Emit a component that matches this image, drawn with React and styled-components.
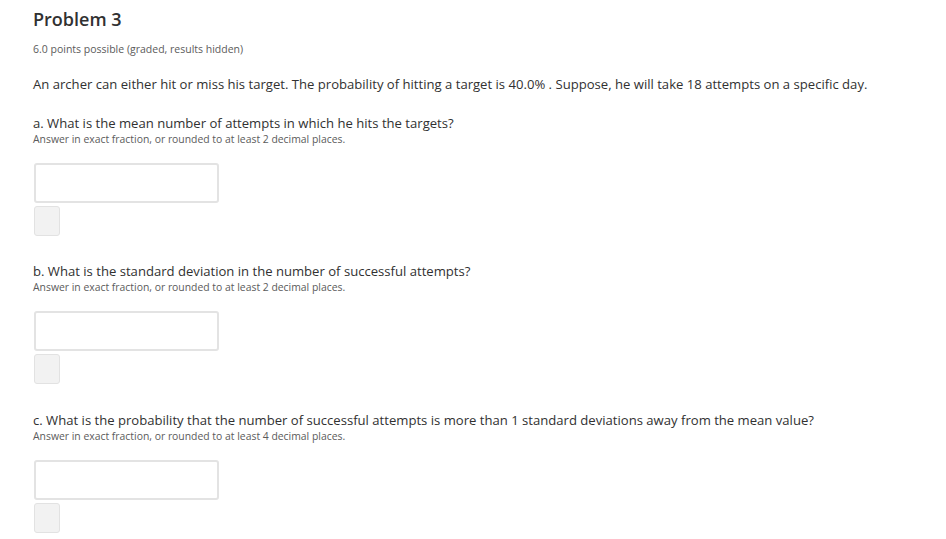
import React from "react";
import styled, { createGlobalStyle } from "styled-components";

const Global = createGlobalStyle`
  html, body { margin: 0; padding: 0; background: #fff; }
  body { font-family: "Open Sans", "Noto Sans", sans-serif; color: #313131; }
`;

const Page = styled.div`
  padding: 6px 33px 0 33px;
`;

const Title = styled.h2`
  margin: 0;
  font-size: 18px;
  font-weight: 600;
  line-height: 26px;
  color: #313131;
`;

const Meta = styled.div`
  margin-top: 10px;
  font-size: 10.5px;
  line-height: 14px;
  color: #5b5b5b;
`;

const Stem = styled.p`
  margin: 18px 0 0 0;
  font-size: 13.1px;
  line-height: 20px;
  color: #313131;
`;

const Part = styled.section`
  margin-top: ${(p) => p.$top}px;
`;

const Question = styled.div`
  font-size: 13.1px;
  line-height: 18px;
  color: #313131;
`;

const Hint = styled.div`
  font-size: 10.4px;
  line-height: 14px;
  color: #5b5b5b;
`;

const Input = styled.input`
  display: block;
  box-sizing: border-box;
  margin: 17px 0 0 1px;
  width: 185px;
  height: 40px;
  border: 2px solid #e3e3e3;
  border-radius: 3px;
  background: #fff;
  outline: none;
`;

const Check = styled.button`
  display: block;
  margin: 3px 0 0 1px;
  width: 26px;
  height: 30px;
  border: 1px solid #e2e2e2;
  border-radius: 3px;
  background: #f2f2f2;
  padding: 0;
`;

const parts = [
  {
    q: "a. What is the mean number of attempts in which he hits the targets?",
    h: "Answer in exact fraction, or rounded to at least 2 decimal places.",
    top: 20,
  },
  {
    q: "b. What is the standard deviation in the number of successful attempts?",
    h: "Answer in exact fraction, or rounded to at least 2 decimal places.",
    top: 26,
  },
  {
    q: "c. What is the probability that the number of successful attempts is more than 1 standard deviations away from the mean value?",
    h: "Answer in exact fraction, or rounded to at least 4 decimal places.",
    top: 27,
  },
];

export default function App() {
  return (
    <>
      <Global />
      <Page>
        <Title>Problem 3</Title>
        <Meta>6.0 points possible (graded, results hidden)</Meta>
        <Stem>
          An archer can either hit or miss his target. The probability of hitting a target is 40.0% . Suppose, he will take 18 attempts on a specific day.
        </Stem>
        {parts.map((p, i) => (
          <Part key={i} $top={p.top}>
            <Question>{p.q}</Question>
            <Hint>{p.h}</Hint>
            <Input type="text" aria-label={p.q} />
            <Check aria-label="submit" />
          </Part>
        ))}
      </Page>
    </>
  );
}
